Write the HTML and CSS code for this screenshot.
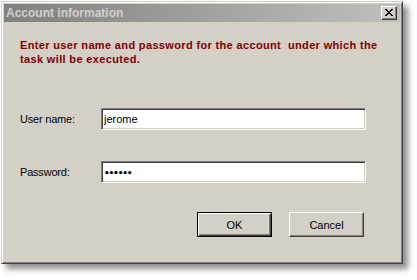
FILE: index.html
```html
<!DOCTYPE html>
<html>
<head>
<meta charset="utf-8">
<link rel="stylesheet" href="styles.css">
</head>
<body>
<div class="window">
  <div class="titlebar">
    <span class="title">Account information</span>
    <span class="close"><svg width="8" height="7" viewBox="0 0 8 7"><path d="M0 0h2v1h1v1h2V1h1V0h2v1H7v1H6v1H5v1h1v1h1v1h1v1H6V6H5V5H3v1H2v1H0V6h1V5h1V4h1V3H2V2H1V1H0z" fill="#000"/></svg></span>
  </div>
  <div class="content">
    <p class="intro">Enter user name and password for the account&nbsp; under which the<br>task will be executed.</p>
    <div class="form">
      <label class="label">User name:</label>
      <div class="field">jerome</div>
      <label class="label">Password:</label>
      <div class="field pw"><span class="dots">••••••</span></div>
    </div>
    <div class="buttons">
      <div class="btn default"><span>OK</span></div>
      <div class="btn"><span>Cancel</span></div>
    </div>
  </div>
</div>
</body>
</html>
```
FILE: styles.css
```css
html, body { margin: 0; padding: 0; background: #fff; }
body { width: 417px; height: 280px; overflow: hidden; }
.window {
  margin: 1px 0 0 1px;
  width: 402px;
  height: 263px;
  box-sizing: border-box;
  background: #d4d0c8;
  border: 1px solid;
  border-color: #d4d0c8 #404040 #404040 #d4d0c8;
  box-shadow: inset 1px 1px 0 #fff, inset -1px -1px 0 #808080, 5px 5px 6px rgba(0,0,0,0.45);
  padding: 2px;
  display: flex;
  flex-direction: column;
}
.titlebar {
  height: 18px;
  background: linear-gradient(to right, #808080, #c0c0c0);
  display: flex;
  align-items: center;
  justify-content: space-between;
  padding: 0 3px 0 2px;
}
.title {
  font-family: "Liberation Sans", Arial, sans-serif;
  font-weight: bold;
  font-size: 12px;
  color: #d4d0c8;
}
.close {
  width: 16px;
  height: 14px;
  box-sizing: border-box;
  background: #d4d0c8;
  border: 1px solid;
  border-color: #fff #404040 #404040 #fff;
  box-shadow: inset -1px -1px 0 #808080;
  display: flex;
  align-items: center;
  justify-content: center;
  padding: 0 1px 1px 0;
}
.close svg { display: block; }
.content {
  padding: 16px 0 0 16px;
  font-family: "Liberation Sans", Arial, sans-serif;
  font-size: 11px;
}
.intro {
  margin: 0;
  color: #800000;
  font-weight: bold;
  font-size: 11px;
  line-height: 14px;
  letter-spacing: 0.35px;
}
.form {
  margin-top: 42px;
  display: grid;
  grid-template-columns: 81px 265px;
  row-gap: 31px;
  align-items: center;
}
.label { color: #000; font-size: 11px; letter-spacing: -0.2px; }
.field {
  height: 22px;
  box-sizing: border-box;
  background: #fff;
  border: 1px solid;
  border-color: #808080 #fff #fff #808080;
  box-shadow: inset 1px 1px 0 #404040, inset -1px -1px 0 #d4d0c8;
  padding: 0 2px;
  line-height: 20px;
  font-size: 11px;
  color: #000;
}
.dots { font-family: "DejaVu Sans", sans-serif; font-size: 9px; letter-spacing: -1.2px; font-weight: bold; }
.buttons {
  margin-top: 29px;
  display: flex;
  gap: 17px;
  padding-left: 177px;
}
.btn {
  width: 75px;
  height: 25px;
  box-sizing: border-box;
  background: #d4d0c8;
  border: 1px solid;
  border-color: #fff #404040 #404040 #fff;
  box-shadow: inset -1px -1px 0 #808080;
  display: flex;
  align-items: center;
  justify-content: center;
  font-size: 11px;
  color: #000;
}
.btn.default {
  border: 1px solid #000;
  box-shadow: inset 1px 1px 0 #fff, inset -1px -1px 0 #404040, inset -2px -2px 0 #808080;
}
```
